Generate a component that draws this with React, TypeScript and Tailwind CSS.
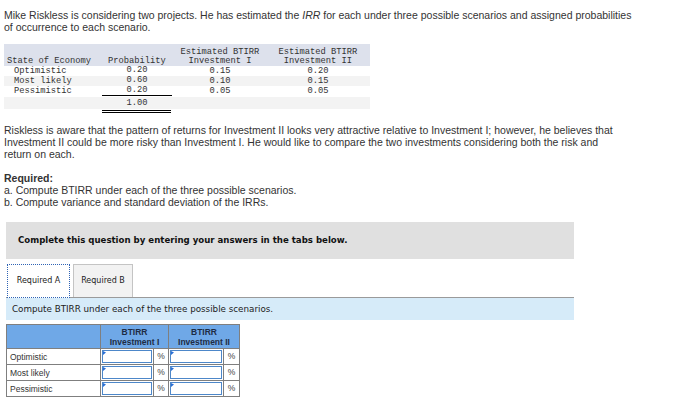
import React from "react";

const mono = "font-['Liberation_Mono',monospace]";
const sans = "font-['Liberation_Sans',Arial,sans-serif]";
const verdana = "font-['DejaVu_Sans',Verdana,sans-serif]";

function InputCell() {
  return (
    <td className="border border-[#7f7f7f] p-[1px] h-[16px]">
      <div className="relative h-[13px] w-full border border-[#4d87c9] bg-white">
        <svg className="absolute left-0 top-0" width="3" height="4" viewBox="0 0 3 4">
          <polygon points="0,0 3,1.5 0,4" fill="#2a6fd6" />
        </svg>
      </div>
    </td>
  );
}

function PctCell() {
  return (
    <td className={`border border-[#7f7f7f] text-center text-[8.5px] text-[#444] ${sans}`}>%</td>
  );
}

export default function App() {
  const rows = [
    { s: "Optimistic", p: "0.20", a: "0.15", b: "0.20", bg: "bg-white" },
    { s: "Most likely", p: "0.60", a: "0.10", b: "0.15", bg: "bg-[#f3f3f3]" },
    { s: "Pessimistic", p: "0.20", a: "0.05", b: "0.05", bg: "bg-white" },
  ];
  return (
    <div className="w-[680px] h-[400px] bg-white overflow-hidden px-[4px] pt-[9px] text-[#333]">
      <p className={`${sans} text-[10.5px] leading-[12px] text-[#333] whitespace-nowrap`}>
        Mike Riskless is considering two projects. He has estimated the <i>IRR</i> for each under three possible
        scenarios and assigned probabilities
        <br />
        of occurrence to each scenario.
      </p>

      {/* Scenario table */}
      <div className={`mt-[11px] ${mono} text-[8.75px] text-[#333] w-[366px]`}>
        <div className="grid grid-cols-[96px_74px_92px_104px] h-[22px] bg-[#dde1ec] leading-[9px]">
          <div className="flex flex-col justify-end pl-[3px]">
            <span>State of Economy</span>
          </div>
          <div className="flex flex-col justify-end items-center">
            <span>Probability</span>
          </div>
          <div className="flex flex-col justify-end items-center">
            <span>Estimated BTIRR</span>
            <span>Investment I</span>
          </div>
          <div className="flex flex-col justify-end items-center">
            <span>Estimated BTIRR</span>
            <span>Investment II</span>
          </div>
        </div>
        {rows.map((r, i) => (
          <div key={r.s} className={`grid grid-cols-[96px_74px_92px_104px] h-[10px] leading-[10px] ${r.bg}`}>
            <div className="pl-[10px]">{r.s}</div>
            <div className="px-[2px]">
              <div className={`text-center h-[10px] leading-[9px] ${i === 2 ? "border-b border-black" : ""}`}>{r.p}</div>
            </div>
            <div className="text-center">{r.a}</div>
            <div className="text-center">{r.b}</div>
          </div>
        ))}
        <div className="mt-[1px] grid grid-cols-[96px_74px_92px_104px] h-[12px] leading-[12px] bg-[#f3f3f3]">
          <div />
          <div className="text-center">1.00</div>
          <div />
          <div />
        </div>
        <div className="mt-[1px] ml-[98px] w-[69px] h-[3px] border-y border-black" />
      </div>

      <p className={`mt-[11px] ${sans} text-[10.5px] leading-[12px] text-[#333] whitespace-nowrap`}>
        Riskless is aware that the pattern of returns for Investment II looks very attractive relative to Investment I;
        however, he believes that
        <br />
        Investment II could be more risky than Investment I. He would like to compare the two investments considering
        both the risk and
        <br />
        return on each.
      </p>

      <div className={`mt-[12px] ${sans} text-[10.5px] leading-[12px] text-[#333]`}>
        <p className="font-bold">Required:</p>
        <p>a. Compute BTIRR under each of the three possible scenarios.</p>
        <p>b. Compute variance and standard deviation of the IRRs.</p>
      </div>

      <div className="ml-[2px] w-[568px]">
        <div className={`mt-[14px] h-[37px] bg-[#e0e0e0] flex items-center pl-[12px] ${verdana} font-bold text-[8.6px] text-[#111]`}>
          Complete this question by entering your answers in the tabs below.
        </div>

        <div className={`mt-[5px] flex items-end gap-[3px] pl-[1px] ${verdana} text-[8px] text-[#222]`}>
          <div className="relative z-10 -mb-[1px] w-[63px] h-[34px] bg-white border border-dotted border-[#2f63b5] flex items-center justify-center">
            Required A
          </div>
          <div className="w-[60px] h-[33px] bg-[#f2f2f2] border border-[#c4c4c4] border-b-0 flex items-center justify-center">
            Required B
          </div>
        </div>
        <div className={`h-[23px] bg-[#d6ebf9] border-t border-[#9a9a9a] flex items-center pl-[6px] pt-[1px] ${verdana} text-[8.75px] text-[#222]`}>
          Compute BTIRR under each of the three possible scenarios.
        </div>

        <table className={`mt-[4px] border-collapse ${sans} text-[8.5px] text-[#333]`}>
          <colgroup>
            <col className="w-[94px]" />
            <col className="w-[53px]" />
            <col className="w-[15px]" />
            <col className="w-[55px]" />
            <col className="w-[16px]" />
          </colgroup>
          <thead>
            <tr className="bg-[#6fa8e7] h-[24px]">
              <th className="border border-[#7f7f7f]" />
              <th colSpan={2} className="border border-[#7f7f7f] font-bold text-[#1e2c44] leading-[10px] text-center">
                BTIRR
                <br />
                Investment I
              </th>
              <th colSpan={2} className="border border-[#7f7f7f] font-bold text-[#1e2c44] leading-[10px] text-center">
                BTIRR
                <br />
                Investment II
              </th>
            </tr>
          </thead>
          <tbody>
            {["Optimistic", "Most likely", "Pessimistic"].map((s) => (
              <tr key={s} className="bg-white">
                <td className="border border-[#7f7f7f] pl-[3px] h-[16px] leading-[14px]">{s}</td>
                <InputCell />
                <PctCell />
                <InputCell />
                <PctCell />
              </tr>
            ))}
          </tbody>
        </table>
      </div>
    </div>
  );
}
